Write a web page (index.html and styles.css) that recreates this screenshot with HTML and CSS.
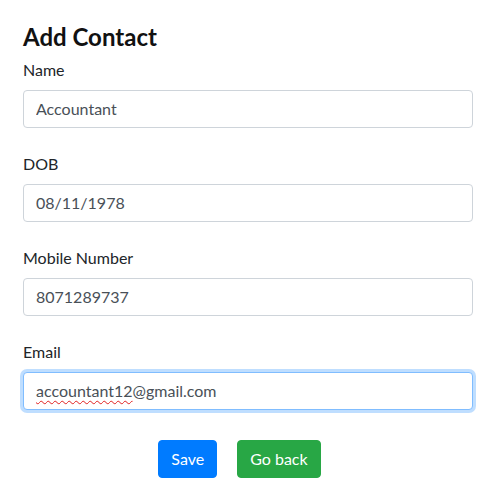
FILE: index.html
```html
<!DOCTYPE html>
<html lang="en">
<head>
<meta charset="utf-8">
<title>Add Contact</title>
<link rel="stylesheet" href="styles.css">
</head>
<body>
<div class="container">
  <h4 class="title">Add Contact</h4>
  <form class="form">
    <div class="form-group">
      <label class="label" for="name">Name</label>
      <input class="form-control" id="name" type="text" value="Accountant">
    </div>
    <div class="form-group">
      <label class="label" for="dob">DOB</label>
      <input class="form-control" id="dob" type="text" value="08/11/1978">
    </div>
    <div class="form-group">
      <label class="label" for="mobile">Mobile Number</label>
      <input class="form-control" id="mobile" type="text" value="8071289737">
    </div>
    <div class="form-group">
      <label class="label">Email</label>
      <div class="form-control focused"><span class="misspelled">accountant12</span>@gmail.com</div>
    </div>
    <div class="actions">
      <button type="button" class="btn btn-primary">Save</button>
      <button type="button" class="btn btn-success">Go back</button>
    </div>
  </form>
</div>
</body>
</html>
```
FILE: styles.css
```css
* { box-sizing: border-box; }
html, body { margin: 0; padding: 0; background: #fff; }
body {
  font-family: "Lato", "Segoe UI", "Noto Sans", sans-serif;
  font-size: 16px;
  line-height: 1.5;
  color: #212529;
}
.container {
  padding: 21px 23px 0 23px;
}
.title {
  margin: 2px 0 6px 0;
  font-size: 24px;
  font-weight: 700;
  line-height: 1.2;
  color: #111;
}
.form { display: flex; flex-direction: column; }
.form-group {
  display: flex;
  flex-direction: column;
  margin-bottom: 24px;
}
.label {
  display: block;
  margin-bottom: 8px;
  line-height: 24px;
}
.form-control {
  display: block;
  width: 100%;
  height: 38px;
  padding: 6px 12px;
  font-family: inherit;
  font-size: 16px;
  line-height: 24px;
  color: #495057;
  background: #fff;
  border: 1px solid #ced4da;
  border-radius: 4px;
  outline: none;
}
.focused {
  border-color: #80bdff;
  box-shadow: 0 0 0 3px rgba(0, 123, 255, 0.25);
}
.misspelled {
  text-decoration: underline wavy #e02020;
  text-decoration-thickness: 1px;
  text-underline-offset: 3px;
}
.actions {
  display: flex;
  justify-content: center;
  margin-top: 6px;
  padding-left: 3px;
}
.btn {
  margin-right: 20px;
  height: 38px;
  padding: 6px 12px;
  font-family: inherit;
  font-size: 16px;
  line-height: 24px;
  border: 1px solid transparent;
  border-radius: 4px;
  color: #fff;
  cursor: pointer;
}
.btn-primary { background: #007bff; border-color: #007bff; }
.btn-success { background: #28a745; border-color: #28a745; }
```
